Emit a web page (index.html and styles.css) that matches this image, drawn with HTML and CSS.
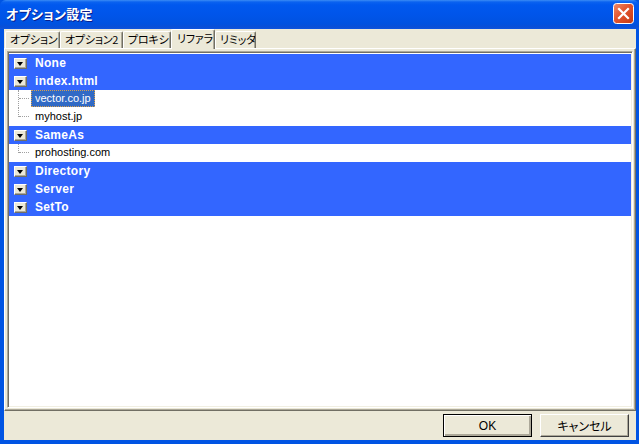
FILE: index.html
```html
<!DOCTYPE html>
<html lang="ja">
<head>
<meta charset="utf-8">
<title>オプション設定</title>
<link rel="stylesheet" href="styles.css">
</head>
<body>
<div class="window">
  <div class="titlebar">
    <span class="title">オプション設定</span>
    <div class="close">
      <svg width="21" height="21" viewBox="0 0 21 21">
        <defs>
          <linearGradient id="cg" x1="0" y1="0" x2="1" y2="1">
            <stop offset="0" stop-color="#f08c6a"/>
            <stop offset="0.45" stop-color="#e2552f"/>
            <stop offset="1" stop-color="#c4380f"/>
          </linearGradient>
        </defs>
        <rect x="0.5" y="0.5" width="20" height="20" rx="3" fill="url(#cg)" stroke="#ffffff"/>
        <path d="M6 6 L15 15 M15 6 L6 15" stroke="#ffffff" stroke-width="2.2" stroke-linecap="square"/>
      </svg>
    </div>
  </div>
  <div class="client">
    <div class="tabs">
      <div class="tab tab-w1">オプション</div>
      <div class="tab tab-w2">オプション2</div>
      <div class="tab tab-w3">プロキシ</div>
      <div class="tab tab-w4 active">リファラ</div>
      <div class="tab tab-w5">リミッタ</div>
    </div>
    <div class="panel">
      <div class="tree">
        <div class="row head"><span class="drop"></span><span class="htext">None</span></div>
        <div class="row head"><span class="drop"></span><span class="htext">index.html</span></div>
        <div class="row child mid"><span class="label selected">vector.co.jp</span></div>
        <div class="row child last"><span class="label">myhost.jp</span></div>
        <div class="row head"><span class="drop"></span><span class="htext">SameAs</span></div>
        <div class="row child last"><span class="label">prohosting.com</span></div>
        <div class="row head"><span class="drop"></span><span class="htext">Directory</span></div>
        <div class="row head"><span class="drop"></span><span class="htext">Server</span></div>
        <div class="row head"><span class="drop"></span><span class="htext">SetTo</span></div>
      </div>
    </div>
    <div class="buttons">
      <button class="btn default">OK</button>
      <button class="btn">キャンセル</button>
    </div>
  </div>
</div>
</body>
</html>
```

FILE: styles.css
```css
* { box-sizing: border-box; }

html, body {
  margin: 0;
  padding: 0;
  background: #0054e3;
}

body {
  width: 639px;
  height: 444px;
  overflow: hidden;
  font-family: "Liberation Sans", "Noto Sans CJK JP", sans-serif;
  font-size: 12px;
}

.window {
  width: 639px;
  height: 444px;
  display: flex;
  flex-direction: column;
  background: #0054e3;
}

.titlebar {
  height: 29px;
  flex: none;
  display: flex;
  align-items: center;
  justify-content: space-between;
  padding: 0 5px 2px 6px;
  background: linear-gradient(to bottom,
    #3b8cf5 0px, #0a62f0 2px, #0058ee 5px, #0055ea 14px, #0052e0 24px, #0a4fd6 27px, #0c55e0 29px);
  border-radius: 6px 6px 0 0;
}

.title {
  color: #ffffff;
  font-family: "Noto Sans CJK JP", sans-serif;
  font-weight: bold;
  font-size: 13px;
  font-feature-settings: "palt";
  letter-spacing: 0.3px;
  text-shadow: 1px 1px 0 #0a1e8c;
  line-height: 16px;
}

.close {
  width: 21px;
  height: 21px;
  display: flex;
}

.client {
  flex: 1;
  margin: 0 3px 4px 4px;
  background: #ece9d8;
  display: flex;
  flex-direction: column;
}

.tabs {
  height: 19px;
  flex: none;
  display: flex;
  align-items: flex-end;
  padding-left: 1px;
}

.tab {
  height: 17px;
  border-top: 1px solid #ffffff;
  border-left: 1px solid #ffffff;
  border-right: 1px solid #716f64;
  box-shadow: inset -1px 0 0 #aca899;
  font-family: "Noto Sans CJK JP", sans-serif;
  font-feature-settings: "palt";
  font-size: 11px;
  letter-spacing: -0.2px;
  line-height: 15px;
  color: #000000;
  padding-left: 4px;
  white-space: nowrap;
  overflow: hidden;
  border-radius: 2px 2px 0 0;
}

.tab-w1 { width: 55px; }
.tab-w2 { width: 63px; }
.tab-w3 { width: 48px; }
.tab-w4 { width: 44px; }
.tab-w5 { width: 41px; }

.tab.active {
  height: 20px;
  margin-bottom: -1px;
  position: relative;
  z-index: 1;
  background: #ece9d8;
  padding-left: 5px;
  line-height: 17px;
}

.panel {
  flex: none;
  height: 363px;
  border-top: 1px solid #ffffff;
  border-left: 1px solid #ffffff;
  border-right: 1px solid #716f64;
  border-bottom: 1px solid #716f64;
  box-shadow: inset -1px -1px 0 #aca899;
  padding: 2px;
}

.tree {
  height: 100%;
  background: #ffffff;
  border-top: 1px solid #aca899;
  border-left: 1px solid #aca899;
  border-right: 1px solid #ffffff;
  border-bottom: 1px solid #ffffff;
  box-shadow: inset 1px 1px 0 #716f64, inset -1px -1px 0 #f1efe2;
  padding: 2px 1px 0 1px;
}

.row {
  height: 18px;
  display: flex;
  align-items: flex-start;
  position: relative;
}

.row.head {
  background: #3366ff;
  padding-left: 5px;
}

.drop {
  width: 13px;
  height: 11px;
  margin-top: 4px;
  background: #ece9d8;
  border-top: 1px solid #ffffff;
  border-left: 1px solid #ffffff;
  border-right: 1px solid #716f64;
  border-bottom: 1px solid #716f64;
  box-shadow: inset -1px -1px 0 #aca899;
  position: relative;
}

.drop::after {
  content: "";
  position: absolute;
  left: 2px;
  top: 3px;
  width: 0;
  height: 0;
  border-left: 3.5px solid transparent;
  border-right: 3.5px solid transparent;
  border-top: 4px solid #000000;
}

.htext {
  margin-left: 8px;
  color: #ffffff;
  font-weight: bold;
  font-size: 12px;
  letter-spacing: 0.3px;
  line-height: 18px;
}

.row.child {
  background: #ffffff;
}

.row.child::before {
  content: "";
  position: absolute;
  left: 9px;
  top: 0;
  height: 9px;
  border-left: 1px dotted #a0a0a0;
}

.row.child.mid::before {
  height: 18px;
}

.row.child::after {
  content: "";
  position: absolute;
  left: 10px;
  top: 8px;
  width: 10px;
  border-top: 1px dotted #a0a0a0;
}

.label {
  margin-left: 22px;
  padding: 0 3px;
  height: 17px;
  font-size: 11px;
  line-height: 17px;
  color: #000000;
  border: 1px solid transparent;
  display: flex;
  align-items: center;
}

.label.selected {
  background: #316ac5;
  color: #ffffff;
  border: 1px dotted #d8a050;
}

.buttons {
  flex: 1;
  display: flex;
  justify-content: flex-end;
  align-items: flex-start;
  gap: 8px;
  padding: 3px 7px 0 0;
}

.btn {
  width: 89px;
  height: 23px;
  margin: 0;
  background: #ece9d8;
  border-top: 1px solid #ffffff;
  border-left: 1px solid #ffffff;
  border-right: 1px solid #404040;
  border-bottom: 1px solid #404040;
  box-shadow: inset -1px -1px 0 #aca899;
  font-family: "Noto Sans CJK JP", sans-serif;
  font-feature-settings: "palt";
  font-size: 12px;
  color: #000000;
  padding: 0;
  line-height: 20px;
}

.btn.default {
  border: 1px solid #000000;
  box-shadow: inset 1px 1px 0 #ffffff, inset -2px -2px 0 #aca899, inset -1px -1px 0 #716f64;
  font-family: "Liberation Sans", sans-serif;
}
```
